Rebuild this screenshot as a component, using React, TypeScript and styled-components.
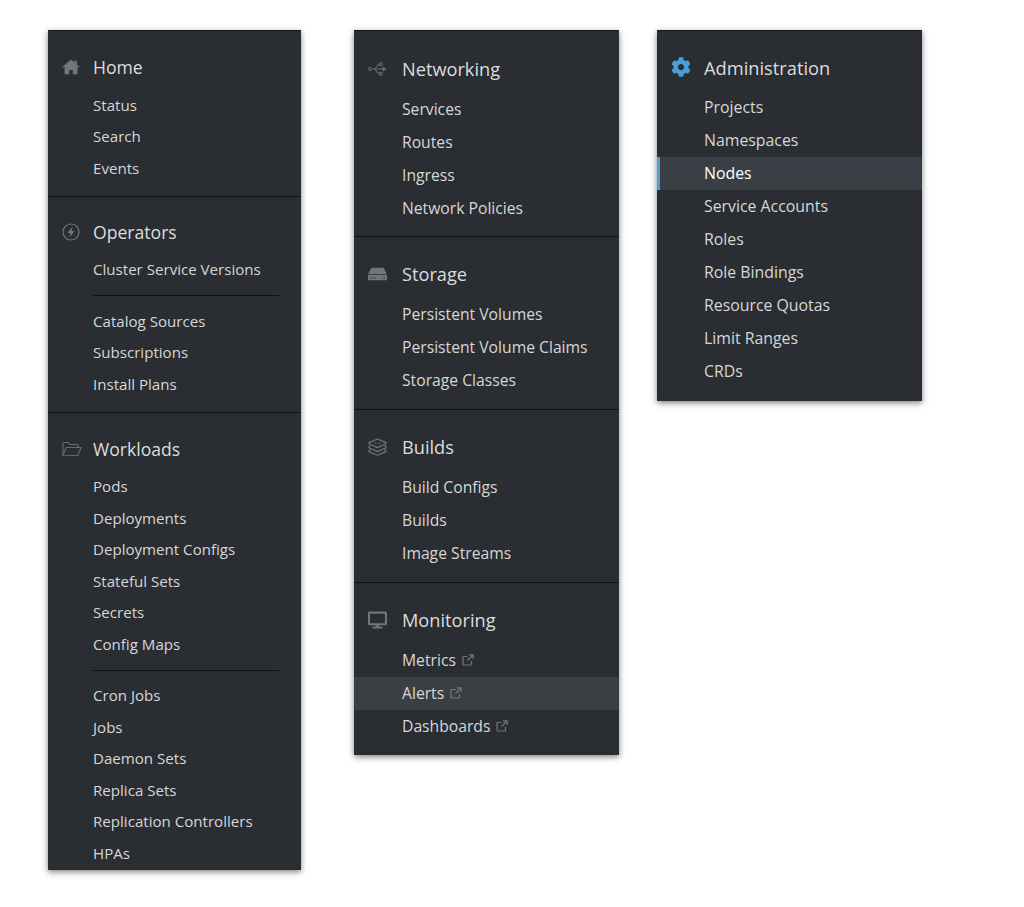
import React from "react";
import styled, { createGlobalStyle } from "styled-components";
import { FaCog, FaDesktop } from "react-icons/fa";

const Global = createGlobalStyle`
  html, body { margin: 0; padding: 0; background: #fff; }
  body { width: 1024px; height: 907px; overflow: hidden; font-family: "Open Sans", sans-serif; }
`;
const Page = styled.div`
  display: flex; align-items: flex-start; padding: 30px 0 0 48px; box-sizing: border-box; height: 907px;
`;
const Panel = styled.nav<{ $w: number; $h: number; $ml: number }>`
  width: ${p => p.$w}px; height: ${p => p.$h}px; margin-left: ${p => p.$ml}px;
  background: #2a2d32; box-shadow: 0 2px 6px rgba(0,0,0,.5); border-top: 1px solid #17191b; box-sizing: border-box;
  color: #d6d7d8; flex: none;
`;
const Section = styled.section<{ $pt: number; $pb: number }>`
  padding: ${p => p.$pt}px 0 ${p => p.$pb}px; border-bottom: 1px solid #0f1011;
  &:last-child { border-bottom: 0; }
`;
const Head = styled.div<{ $x: number; $h: number; $fs: number; $mb: number }>`
  display: flex; align-items: center; height: ${p => p.$h}px; padding-left: ${p => p.$x}px;
  margin-bottom: ${p => p.$mb}px; font-size: ${p => p.$fs}px; color: #dcddde; position: relative;
`;
const IconBox = styled.span<{ $x: number }>`
  position: absolute; left: ${p => p.$x}px; top: 50%; transform: translateY(-50%); display: flex;
  color: #72767b;
`;
const Item = styled.div<{ $x: number; $h: number; $fs: number; $active?: boolean; $hover?: boolean }>`
  display: flex; align-items: center; gap: 6px; height: ${p => p.$h}px; padding-left: ${p => p.$x}px;
  font-size: ${p => p.$fs}px; color: ${p => (p.$active ? "#fff" : "#d6d7d8")}; font-weight: ${p => (p.$active ? 500 : 400)};
  background: ${p => (p.$active ? "#393d44" : p.$hover ? "#3b3f43" : "transparent")};
  box-shadow: ${p => (p.$active ? "inset 3px 0 0 #4a9fd8" : "none")};
`;
const Rule = styled.div`
  height: 1px; background: #0f1011; margin: 10px 22px 9px 45px;
`;

const Ext = () => (
  <svg width="12" height="12" viewBox="0 0 12 12" fill="none" stroke="#74777b" strokeWidth="1.2">
    <path d="M9.5 7v3a1 1 0 0 1-1 1H2a1 1 0 0 1-1-1V3.5a1 1 0 0 1 1-1h3.5" />
    <path d="M7 .8h4.2V5M11 1 5.5 6.5" />
  </svg>
);
const Home = () => (
  <svg width="18" height="15" viewBox="0 0 18 15" fill="#72767b">
    <path d="M9 0 0 7.8h2.6V15h4.6v-4.4h3.6V15h4.6V7.8H18l-3.2-2.8V1h-2.2v2.1z" />
  </svg>
);
const Bolt = () => (
  <svg width="18" height="18" viewBox="0 0 18 18" fill="none" stroke="#72767b" strokeWidth="1.2">
    <circle cx="9" cy="9" r="8" />
    <path d="M10.6 3.4 5.4 10h3l-1 4.6L12.6 8h-3z" fill="#72767b" stroke="none" />
  </svg>
);
const Folder = () => (
  <svg width="20" height="15" viewBox="0 0 20 15" fill="none" stroke="#686b70" strokeWidth="1.1" strokeLinejoin="round">
    <path d="M1 13.6V2a1 1 0 0 1 1-1h4.2l1.6 2H15a1 1 0 0 1 1 1v1.8" />
    <path d="M1 13.8 4.2 6h14.9l-3.3 8z" />
  </svg>
);
const Net = () => (
  <svg width="19" height="15" viewBox="0 0 19 15" fill="none" stroke="#6a6d71" strokeWidth="1">
    <circle cx="2" cy="7.5" r="1.5" />
    <path d="M3.5 7.5H15M7 7.5l3-4.6h1.5M7 7.5l3 4.6h1.5" />
    <rect x="11.5" y="1.5" width="2.6" height="2.6" />
    <rect x="11.5" y="10.9" width="2.6" height="2.6" />
    <path d="M15 5.8 18 7.5l-3 1.7z" fill="#6a6d71" />
  </svg>
);
const Disk = () => (
  <svg width="19" height="13" viewBox="0 0 19 13" fill="#72767b">
    <path d="M3.6 0h11.8L19 6.8H0z" />
    <path d="M.3 7.6h18.4a.3.3 0 0 1 .3.3v4.8a.3.3 0 0 1-.3.3H.3a.3.3 0 0 1-.3-.3V7.9a.3.3 0 0 1 .3-.3z" />
    <path d="M2 10h1.4v1H2zM4.4 10h1.4v1H4.4zM6.8 10h1.4v1H6.8zM14 10h1v1h-1zM16 10h1v1h-1z" fill="#2a2d32" />
  </svg>
);
const Layers = () => (
  <svg width="19" height="18" viewBox="0 0 19 18" fill="none" stroke="#72767b" strokeWidth="1.2" strokeLinejoin="round">
    <path d="M9.5 1 18 4.6v1.2L9.5 9.6 1 5.8V4.6z" />
    <path d="M6.8 5.2h1.6M10.6 5.2h1.6" />
    <path d="M2.6 7.6 1 8.6v1.2l8.5 3.8 8.5-3.8V8.6l-1.6-1" />
    <path d="M2.6 11.6 1 12.6v1l8.5 3.6 8.5-3.6v-1l-1.6-1" />
  </svg>
);

type Row = string | { t: string; ext?: boolean; active?: boolean; hover?: boolean; rule?: boolean };
type Sec = { title: string; icon: React.ReactNode; items: Row[]; pt: number; pb: number };

const col1: Sec[] = [
  { title: "Home", icon: <Home />, pt: 20, pb: 12, items: ["Status", "Search", "Events"] },
  { title: "Operators", icon: <Bolt />, pt: 19, pb: 12, items: ["Cluster Service Versions", { t: "rule", rule: true }, "Catalog Sources", "Subscriptions", "Install Plans"] },
  { title: "Workloads", icon: <Folder />, pt: 20, pb: 0, items: ["Pods", "Deployments", "Deployment Configs", "Stateful Sets", "Secrets", "Config Maps", { t: "rule", rule: true }, "Cron Jobs", "Jobs", "Daemon Sets", "Replica Sets", "Replication Controllers", "HPAs"] },
];
const col2: Sec[] = [
  { title: "Networking", icon: <Net />, pt: 21, pb: 12, items: ["Services", "Routes", "Ingress", "Network Policies"] },
  { title: "Storage", icon: <Disk />, pt: 20, pb: 13, items: ["Persistent Volumes", "Persistent Volume Claims", "Storage Classes"] },
  { title: "Builds", icon: <Layers />, pt: 20, pb: 13, items: ["Build Configs", "Builds", "Image Streams"] },
  { title: "Monitoring", icon: <FaDesktop size={19} />, pt: 20, pb: 0, items: [{ t: "Metrics", ext: true }, { t: "Alerts", ext: true, hover: true }, { t: "Dashboards", ext: true }] },
];
const col3: Sec[] = [
  { title: "Administration", icon: <FaCog size={20} color="#4a9fd8" />, pt: 19, pb: 0, items: ["Projects", "Namespaces", { t: "Nodes", active: true }, "Service Accounts", "Roles", "Role Bindings", "Resource Quotas", "Limit Ranges", "CRDs"] },
];

type ColProps = { secs: Sec[]; w: number; h: number; ml: number; x: number; ix: number; ih: number; hh: number; hf: number; f: number; mb: number };

const Column = ({ secs, w, h, ml, x, ix, ih, hh, hf, f, mb }: ColProps) => (
  <Panel $w={w} $h={h} $ml={ml}>
    {secs.map(s => (
      <Section key={s.title} $pt={s.pt} $pb={s.pb}>
        <Head $x={x} $h={hh} $fs={hf} $mb={mb}><IconBox $x={ix}>{s.icon}</IconBox>{s.title}</Head>
        {s.items.map((it, i) => {
          const r = typeof it === "string" ? ({ t: it } as Exclude<Row, string>) : it;
          if (r.rule) return <Rule key={i} />;
          return <Item key={i} $x={x} $h={ih} $fs={f} $active={r.active} $hover={r.hover}>{r.t}{r.ext && <Ext />}</Item>;
        })}
      </Section>
    ))}
  </Panel>
);

export default function App() {
  return (
    <>
      <Global />
      <Page>
        <Column secs={col1} w={253} h={840} ml={0} x={45} ix={14} ih={31.5} hh={32} hf={17.6} f={15.1} mb={6} />
        <Column secs={col2} w={265} h={725} ml={53} x={48} ix={14} ih={32.9} hh={34} hf={18.2} f={15.7} mb={6.5} />
        <Column secs={col3} w={265} h={371} ml={38} x={47} ix={14} ih={33} hh={34} hf={18.3} f={15.85} mb={6.5} />
      </Page>
    </>
  );
}
